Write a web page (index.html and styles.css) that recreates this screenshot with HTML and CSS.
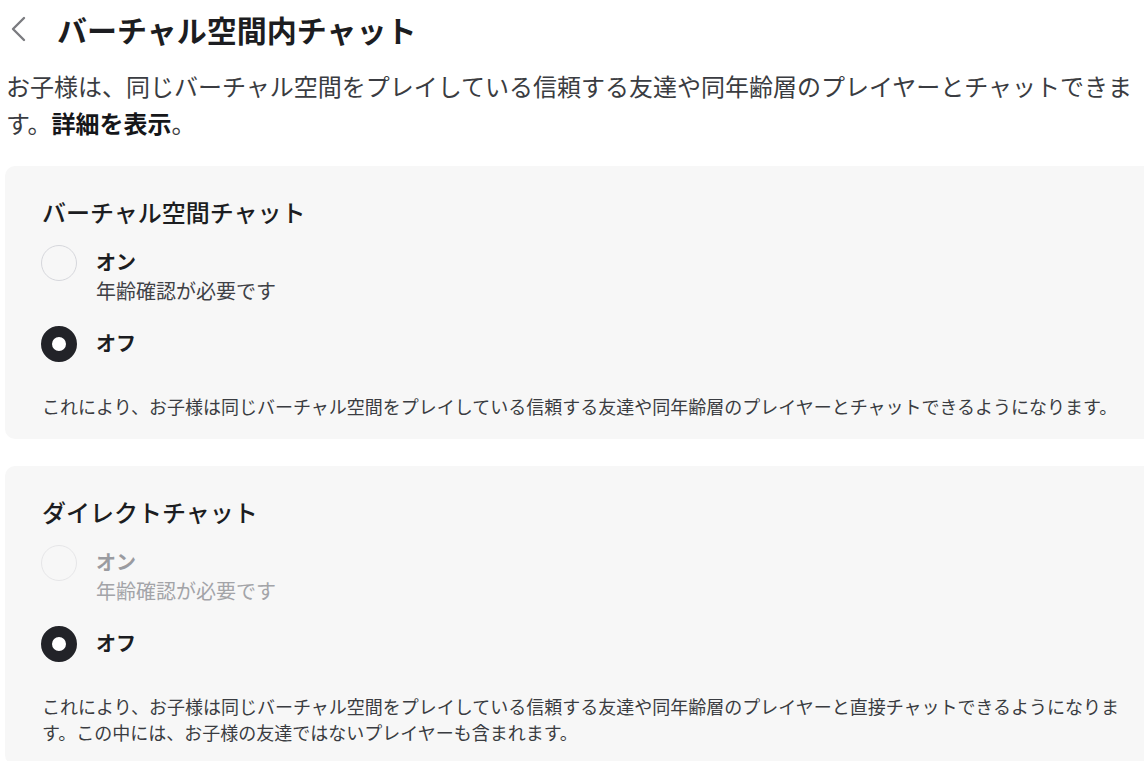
FILE: index.html
```html
<!DOCTYPE html>
<html lang="ja">
<head>
<meta charset="utf-8">
<title>バーチャル空間内チャット</title>
<link rel="stylesheet" href="styles.css">
</head>
<body>
<div class="page">
  <header class="title-row">
    <span class="back" aria-label="戻る">
      <svg width="20" height="28" viewBox="0 0 20 28"><path d="M16 3 L5 14 L16 25" fill="none" stroke="#7b7c80" stroke-width="2.4" stroke-linecap="round" stroke-linejoin="round"/></svg>
    </span>
    <h1 class="title">バーチャル空間内チャット</h1>
  </header>
  <p class="desc"><span>お子様は、同じバーチャル空間をプレイしている信頼する友達や同年齢層のプレイヤーとチャットできま</span><span>す。</span><a class="more">詳細を表示</a><span>。</span></p>

  <section class="card">
    <h2 class="card-title">バーチャル空間チャット</h2>
    <div class="option">
      <span class="radio"></span>
      <div class="opt-text">
        <div class="opt-label">オン</div>
        <div class="opt-sub">年齢確認が必要です</div>
      </div>
    </div>
    <div class="option">
      <span class="radio checked"></span>
      <div class="opt-text">
        <div class="opt-label">オフ</div>
      </div>
    </div>
    <p class="note">これにより、お子様は同じバーチャル空間をプレイしている信頼する友達や同年齢層のプレイヤーとチャットできるようになります。</p>
  </section>

  <section class="card">
    <h2 class="card-title">ダイレクトチャット</h2>
    <div class="option disabled">
      <span class="radio"></span>
      <div class="opt-text">
        <div class="opt-label">オン</div>
        <div class="opt-sub">年齢確認が必要です</div>
      </div>
    </div>
    <div class="option">
      <span class="radio checked"></span>
      <div class="opt-text">
        <div class="opt-label">オフ</div>
      </div>
    </div>
    <p class="note"><span>これにより、お子様は同じバーチャル空間をプレイしている信頼する友達や同年齢層のプレイヤーと直接チャットできるようになりま</span><span>す。この中には、お子様の友達ではないプレイヤーも含まれます。</span></p>
  </section>
</div>
</body>
</html>
```
FILE: styles.css
```css
html, body {
  margin: 0;
  padding: 0;
  background: #ffffff;
  overflow: hidden;
}
body {
  font-family: "Noto Sans CJK JP", "Noto Sans", sans-serif;
  color: #1f2024;
}
.page {
  width: 1150px;
  padding-left: 5px;
}
.title-row {
  display: flex;
  align-items: center;
  height: 58px;
}
.back {
  display: flex;
  width: 20px;
  margin-left: 3px;
}
.title {
  margin: 0 0 0 29px;
  font-size: 30px;
  font-weight: 700;
  line-height: 40px;
  color: #1c1d21;
}
.desc {
  margin: 9px 0 25px 1px;
  font-size: 24px;
  line-height: 37px;
  color: #3a3c41;
}
.more {
  color: #16171a;
  font-weight: 600;
}
.card {
  background: #f7f7f7;
  border-radius: 10px;
  padding: 28px 24px 20px 37px;
  margin-bottom: 27px;
  width: 1089px;
}
.card-title {
  margin: 0 0 15px;
  font-size: 24px;
  font-weight: 500;
  line-height: 36px;
  color: #1c1d21;
}
.option {
  display: flex;
  align-items: flex-start;
  gap: 19px;
  margin-bottom: 20px;
}
.radio {
  box-sizing: border-box;
  width: 36px;
  height: 36px;
  border-radius: 50%;
  border: 1px solid #d6d7dc;
  margin-left: -1px;
  flex: none;
}
.radio.checked {
  border: 11px solid #222328;
  background: #ffffff;
}
.opt-text {
  padding-top: 3px;
}
.opt-label {
  font-size: 20px;
  font-weight: 700;
  line-height: 28px;
  color: #1c1d21;
}
.opt-sub {
  font-size: 20px;
  line-height: 30px;
  color: #3f4146;
}
.option.disabled .radio {
  border-color: #e6e6e8;
}
.option.disabled .opt-label {
  color: #9a9ba0;
}
.option.disabled .opt-sub {
  color: #a3a4a8;
}
.note {
  margin: 31px 0 0;
  font-size: 18px;
  line-height: 26px;
  color: #3a3c41;
}
```
